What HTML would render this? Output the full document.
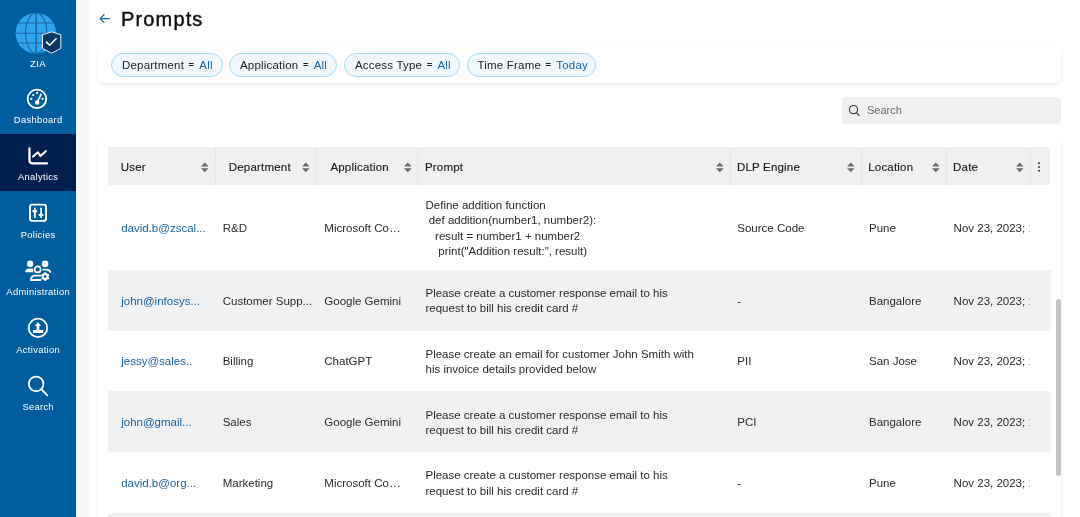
<!DOCTYPE html>
<html><head><meta charset="utf-8">
<style>
*{box-sizing:border-box;margin:0;padding:0}
html,body{width:1080px;height:517px;overflow:hidden;background:#fff;font-family:"Liberation Sans",sans-serif;color:#2b2b2b}
.abs{position:absolute}
#side{position:absolute;left:0;top:0;width:76px;height:517px;background:#005e9e}
#strip{position:absolute;left:76px;top:0;width:14px;height:517px;background:#f7f8fa}
.nav{position:absolute;left:0;width:76px;height:57.4px}
.nav.active{background:#00204e}
.nav svg{position:absolute;left:26px;top:11px}
.nav .lbl{position:absolute;left:0.15px;width:76px;text-align:center;font-size:9.4px;line-height:12px;letter-spacing:0.3px;color:#fff;top:37.5px}
#title{position:absolute;left:121px;top:5px;font-size:20px;line-height:28px;letter-spacing:1.15px;color:#111;-webkit-text-stroke:0.45px #111}
#back{position:absolute;left:99px;top:14px}
.card{position:absolute;background:#fff;border-radius:7px;box-shadow:0 1px 3px rgba(0,0,0,0.05),0 2px 9px rgba(0,0,0,0.05)}
.chip{position:absolute;top:53px;height:23.5px;border:1px solid #a9d8f5;background:#eff7fd;border-radius:12px;font-size:11.5px;line-height:21.5px;letter-spacing:0.2px;color:#242424;padding-left:10px;white-space:nowrap}
.chip b{font-weight:normal;color:#1664a2}
.chip i{font-style:normal;margin:0 5px 0 4.5px;font-size:9.5px;vertical-align:0.5px;font-weight:bold}
#search{position:absolute;left:842px;top:97px;width:219px;height:26.5px;background:#eff0f2;border-radius:4px}
#search span{position:absolute;left:25px;top:6px;font-size:11px;line-height:14px;color:#6b6b6b}
#thead{position:absolute;left:108px;top:147px;width:942px;height:38px;background:#eff0f2;border-top-right-radius:5px}
.th{position:absolute;font-size:11.5px;line-height:15.2px;white-space:nowrap;letter-spacing:0.2px;color:#1c1c1c;-webkit-text-stroke:0.15px #1c1c1c}
.div{position:absolute;top:1px;width:1px;height:37px;background:#e3e5e8}
.sort{position:absolute;top:15px}
.row{position:absolute;left:108px;width:943px}
.row.g{background:#f0f1f3}
.td{position:absolute;font-size:11.5px;line-height:15.2px;color:#2b2b2b;white-space:nowrap;overflow:hidden}
.u{color:#1b64a0}
#thumb{position:absolute;left:1056px;top:298.5px;width:5px;height:177.5px;background:#c4c4c4;border-radius:3px}
</style></head>
<body style="will-change:transform">
<div id="side">
  <svg class="abs" style="left:13px;top:11px" width="50" height="46" viewBox="13 11 50 46">
    <defs><clipPath id="gc"><circle cx="35.9" cy="33.2" r="20.3"/></clipPath></defs>
    <circle cx="35.9" cy="33.2" r="20.3" fill="#30a5ef"/>
    <g stroke="#1a66a6" stroke-width="1.1" fill="none" clip-path="url(#gc)">
      <line x1="36.2" y1="12" x2="36.2" y2="54" stroke-width="1.5"/>
      <ellipse cx="36.2" cy="33.2" rx="10.6" ry="20.3"/>
      <line x1="14" y1="33.2" x2="58" y2="33.2"/>
      <line x1="14" y1="23" x2="58" y2="23"/>
      <line x1="14" y1="43" x2="58" y2="43"/>
    </g>
    <path d="M51.6 31.9 L60.8 34.7 L60.8 48.4 L51.6 53.3 L42.5 48.4 L42.5 34.7 Z" fill="#0b3765" stroke="#fff" stroke-width="0.9"/>
    <path d="M46.5 42.1 L49.6 45.2 L56 38.9" fill="none" stroke="#fff" stroke-width="1.5" stroke-linecap="round" stroke-linejoin="round"/>
  </svg>
  <div class="abs" style="left:0;top:57.5px;width:76px;text-align:center;font-size:9.6px;letter-spacing:0.3px;line-height:12px;color:#fff">ZIA</div>

  <div class="nav" style="top:76.5px">
    <svg width="24" height="24" viewBox="0 0 24 24" style="left:25.2px;top:10px">
      <circle cx="11.95" cy="11.85" r="9.3" fill="none" stroke="#fff" stroke-width="1.8"/>
      <circle cx="12.2" cy="15.5" r="2.2" fill="#fff"/>
      <path d="M12.2 15.5 L16 7.3" stroke="#fff" stroke-width="1.7" stroke-linecap="round"/>
      <circle cx="12.2" cy="6" r="1.15" fill="#fff"/>
      <circle cx="8.2" cy="8.1" r="1.15" fill="#fff"/>
      <circle cx="6.3" cy="11.8" r="1.15" fill="#fff"/>
      <circle cx="17.6" cy="11.8" r="1.15" fill="#fff"/>
    </svg>
    <div class="lbl">Dashboard</div>
  </div>
  <div class="nav active" style="top:133.9px">
    <svg width="24" height="24" viewBox="0 0 24 24" style="left:25.5px;top:10px">
      <path d="M3.46 4.5 V16.3 Q3.46 19.3 6.46 19.3 H21.1" fill="none" stroke="#fff" stroke-width="2.3" stroke-linecap="round" stroke-linejoin="round"/>
      <path d="M7.0 12.6 L11.9 8.3 L14.5 12.1 L20.0 7.0" fill="none" stroke="#fff" stroke-width="2" stroke-linecap="round" stroke-linejoin="round"/>
    </svg>
    <div class="lbl">Analytics</div>
  </div>
  <div class="nav" style="top:191.3px">
    <svg width="24" height="24" viewBox="0 0 24 24" style="left:25.7px;top:10px">
      <rect x="4.0" y="3.65" width="16.1" height="16.2" rx="2.4" fill="none" stroke="#fff" stroke-width="1.9"/>
      <path d="M8.85 6.7 V16.8 M15.1 6.7 V16.8" stroke="#fff" stroke-width="1.8"/>
      <path d="M6.4 10.2 H11.1 M12.7 14.0 H17.4" stroke="#fff" stroke-width="2"/>
    </svg>
    <div class="lbl">Policies</div>
  </div>
  <div class="nav" style="top:248.7px">
    <svg width="28" height="24" viewBox="0 0 28 24" style="left:24px;top:10px">
      <circle cx="6.1" cy="4.8" r="3.2" fill="#fff"/>
      <path d="M1.1 13.3 C1.1 11 2.8 9.5 5.5 9.5 H9.3 V13.3 Z" fill="#fff"/>
      <circle cx="21.1" cy="4.9" r="3.3" fill="#fff"/>
      <path d="M19.4 10.7 H22.2 Q25.3 10.7 26.3 13.0" fill="none" stroke="#fff" stroke-width="1.7" stroke-linecap="round"/>
      <circle cx="13.7" cy="10.4" r="3.0" fill="none" stroke="#fff" stroke-width="1.7"/>
      <path d="M16.4 16.6 H11.2 Q7.0 16.6 7.0 21.0 H16.4" fill="none" stroke="#fff" stroke-width="1.8" stroke-linecap="round"/>
      <g transform="translate(21.2 17.6)" stroke="#fff" fill="none">
        <circle r="2.45" stroke-width="2.1"/>
        <g stroke-width="1.9" stroke-linecap="butt"><path d="M0 -2.7 V-4.3" transform="rotate(0)"/><path d="M0 -2.7 V-4.3" transform="rotate(60)"/><path d="M0 -2.7 V-4.3" transform="rotate(120)"/><path d="M0 -2.7 V-4.3" transform="rotate(180)"/><path d="M0 -2.7 V-4.3" transform="rotate(240)"/><path d="M0 -2.7 V-4.3" transform="rotate(300)"/></g>
      </g>
    </svg>
    <div class="lbl">Administration</div>
  </div>
  <div class="nav" style="top:306.1px">
    <svg width="24" height="24" viewBox="0 0 24 24" style="left:25.7px;top:10px">
      <circle cx="11.95" cy="11.9" r="9.25" fill="none" stroke="#fff" stroke-width="1.8"/>
      <path d="M11.95 6.0 L15.1 10.1 H13.3 V14.2 H10.6 V10.1 H8.8 Z" fill="#fff"/>
      <path d="M7.0 13.9 H10.6 Q11.95 14.9 13.3 13.9 H17.3 V16.9 H7.0 Z" fill="#fff"/>
    </svg>
    <div class="lbl">Activation</div>
  </div>
  <div class="nav" style="top:363.5px">
    <svg width="24" height="24" viewBox="0 0 24 24" style="left:25.5px;top:10px">
      <circle cx="10.15" cy="9.9" r="7.3" fill="none" stroke="#fff" stroke-width="1.75"/>
      <path d="M15.4 15.2 L21.3 21.3" stroke="#fff" stroke-width="1.8" stroke-linecap="round"/>
    </svg>
    <div class="lbl">Search</div>
  </div>
</div>
<div id="strip"></div>

<svg id="back" width="12" height="11" viewBox="0 0 12 11">
  <path d="M10.5 4.6 H1.2 M5 0.8 L1.1 4.6 L5 8.4" fill="none" stroke="#1a6aa8" stroke-width="1.3" stroke-linecap="round" stroke-linejoin="round"/>
</svg>
<div id="title">Prompts</div>

<div class="card" style="left:98px;top:46px;width:963px;height:37px"></div>
<div class="chip" style="left:111px;width:112px">Department<i>=</i><b>All</b></div>
<div class="chip" style="left:229px;width:108px">Application<i>=</i><b>All</b></div>
<div class="chip" style="left:344px;width:116px">Access Type<i>=</i><b>All</b></div>
<div class="chip" style="left:466.5px;width:129px">Time Frame<i>=</i><b>Today</b></div>

<div id="search">
  <svg class="abs" style="left:6px;top:7.5px" width="12" height="12" viewBox="0 0 12 12">
    <circle cx="5.5" cy="4.6" r="4.1" fill="none" stroke="#3a3a3a" stroke-width="1.15"/>
    <path d="M8.5 7.7 L11.2 10.6" stroke="#3a3a3a" stroke-width="1.2" stroke-linecap="round"/>
  </svg>
  <span>Search</span>
</div>

<div class="card" style="left:98px;top:137px;width:963px;height:400px"></div>

<div id="thead">
<div class="th" style="left:12.8px;top:13.42px">User</div>
<svg class="sort" width="9" height="11" viewBox="0 0 9 11" style="left:92.6px;top:14.6px"><path d="M0 4.6 L3.8 0.6 L7.6 4.6 Z M0 6.2 L3.8 10.2 L7.6 6.2 Z" fill="#6a6a6a"/></svg>
<div class="th" style="left:120.7px;top:13.42px">Department</div>
<svg class="sort" width="9" height="11" viewBox="0 0 9 11" style="left:193.6px;top:14.6px"><path d="M0 4.6 L3.8 0.6 L7.6 4.6 Z M0 6.2 L3.8 10.2 L7.6 6.2 Z" fill="#6a6a6a"/></svg>
<div class="th" style="left:222.4px;top:13.42px">Application</div>
<svg class="sort" width="9" height="11" viewBox="0 0 9 11" style="left:295.5px;top:14.6px"><path d="M0 4.6 L3.8 0.6 L7.6 4.6 Z M0 6.2 L3.8 10.2 L7.6 6.2 Z" fill="#6a6a6a"/></svg>
<div class="th" style="left:316.9px;top:13.42px">Prompt</div>
<svg class="sort" width="9" height="11" viewBox="0 0 9 11" style="left:607.8px;top:14.6px"><path d="M0 4.6 L3.8 0.6 L7.6 4.6 Z M0 6.2 L3.8 10.2 L7.6 6.2 Z" fill="#6a6a6a"/></svg>
<div class="th" style="left:628.9px;top:13.42px">DLP Engine</div>
<svg class="sort" width="9" height="11" viewBox="0 0 9 11" style="left:739.0px;top:14.6px"><path d="M0 4.6 L3.8 0.6 L7.6 4.6 Z M0 6.2 L3.8 10.2 L7.6 6.2 Z" fill="#6a6a6a"/></svg>
<div class="th" style="left:760.2px;top:13.42px">Location</div>
<svg class="sort" width="9" height="11" viewBox="0 0 9 11" style="left:823.6px;top:14.6px"><path d="M0 4.6 L3.8 0.6 L7.6 4.6 Z M0 6.2 L3.8 10.2 L7.6 6.2 Z" fill="#6a6a6a"/></svg>
<div class="th" style="left:845.1px;top:13.42px">Date</div>
<svg class="sort" width="9" height="11" viewBox="0 0 9 11" style="left:908.0px;top:14.6px"><path d="M0 4.6 L3.8 0.6 L7.6 4.6 Z M0 6.2 L3.8 10.2 L7.6 6.2 Z" fill="#6a6a6a"/></svg>
<div class="div" style="left:107px"></div>
<div class="div" style="left:208px"></div>
<div class="div" style="left:309px"></div>
<div class="div" style="left:622px"></div>
<div class="div" style="left:753px"></div>
<div class="div" style="left:838px"></div>
<div class="div" style="left:922px"></div>
<svg class="abs" style="left:929px;top:15px" width="4" height="10" viewBox="0 0 4 10"><circle cx="2" cy="1.3" r="1.0" fill="#333"/><circle cx="2" cy="5" r="1.0" fill="#333"/><circle cx="2" cy="8.7" r="1.0" fill="#333"/></svg>
</div>
<div class="row" style="top:185.0px;height:85.0px"></div>
<div class="td u" style="left:121.2px;top:221.02px">david.b@zscal...</div>
<div class="td" style="left:222.7px;top:221.02px">R&amp;D</div>
<div class="td" style="left:324.3px;top:221.02px">Microsoft Co<span style="letter-spacing:0.45px;margin-left:0.8px">...</span></div>
<div class="td" style="left:425.5px;top:198.12px">Define addition function<br>&nbsp;def addition(number1, number2):<br>&nbsp;&nbsp;&nbsp;result = number1 + number2<br>&nbsp;&nbsp;&nbsp;&nbsp;print("Addition result:", result)</div>
<div class="td" style="left:737.3px;top:221.02px">Source Code</div>
<div class="td" style="left:869.0px;top:221.02px">Pune</div>
<div class="td" style="left:953.6px;top:221.02px;width:76.4px">Nov 23, 2023; 10:45 AM</div>
<div class="row g" style="top:270.0px;height:60.5px"></div>
<div class="td u" style="left:121.2px;top:293.77px">john@infosys...</div>
<div class="td" style="left:222.7px;top:293.77px">Customer Supp...</div>
<div class="td" style="left:324.3px;top:293.77px">Google Gemini</div>
<div class="td" style="left:425.5px;top:286.07px">Please create a customer response email to his<br>request to bill his credit card #</div>
<div class="td" style="left:737.3px;top:293.77px">-</div>
<div class="td" style="left:869.0px;top:293.77px">Bangalore</div>
<div class="td" style="left:953.6px;top:293.77px;width:76.4px">Nov 23, 2023; 10:45 AM</div>
<div class="row" style="top:330.5px;height:60.8px"></div>
<div class="td u" style="left:121.2px;top:354.42px">jessy@sales..</div>
<div class="td" style="left:222.7px;top:354.42px">Billing</div>
<div class="td" style="left:324.3px;top:354.42px">ChatGPT</div>
<div class="td" style="left:425.5px;top:346.72px">Please create an email for customer John Smith with<br>his invoice details provided below</div>
<div class="td" style="left:737.3px;top:354.42px">PII</div>
<div class="td" style="left:869.0px;top:354.42px">San Jose</div>
<div class="td" style="left:953.6px;top:354.42px;width:76.4px">Nov 23, 2023; 10:45 AM</div>
<div class="row g" style="top:391.3px;height:60.8px"></div>
<div class="td u" style="left:121.2px;top:415.22px">john@gmail...</div>
<div class="td" style="left:222.7px;top:415.22px">Sales</div>
<div class="td" style="left:324.3px;top:415.22px">Google Gemini</div>
<div class="td" style="left:425.5px;top:407.52px">Please create a customer response email to his<br>request to bill his credit card #</div>
<div class="td" style="left:737.3px;top:415.22px">PCI</div>
<div class="td" style="left:869.0px;top:415.22px">Bangalore</div>
<div class="td" style="left:953.6px;top:415.22px;width:76.4px">Nov 23, 2023; 10:45 AM</div>
<div class="row" style="top:452.1px;height:60.9px"></div>
<div class="td u" style="left:121.2px;top:476.07px">david.b@org...</div>
<div class="td" style="left:222.7px;top:476.07px">Marketing</div>
<div class="td" style="left:324.3px;top:476.07px">Microsoft Co<span style="letter-spacing:0.45px;margin-left:0.8px">...</span></div>
<div class="td" style="left:425.5px;top:468.37px">Please create a customer response email to his<br>request to bill his credit card #</div>
<div class="td" style="left:737.3px;top:476.07px">-</div>
<div class="td" style="left:869.0px;top:476.07px">Pune</div>
<div class="td" style="left:953.6px;top:476.07px;width:76.4px">Nov 23, 2023; 10:45 AM</div>
<div class="row g" style="top:513.0px;height:61.0px"></div>
<div id="thumb"></div>
</body></html>
